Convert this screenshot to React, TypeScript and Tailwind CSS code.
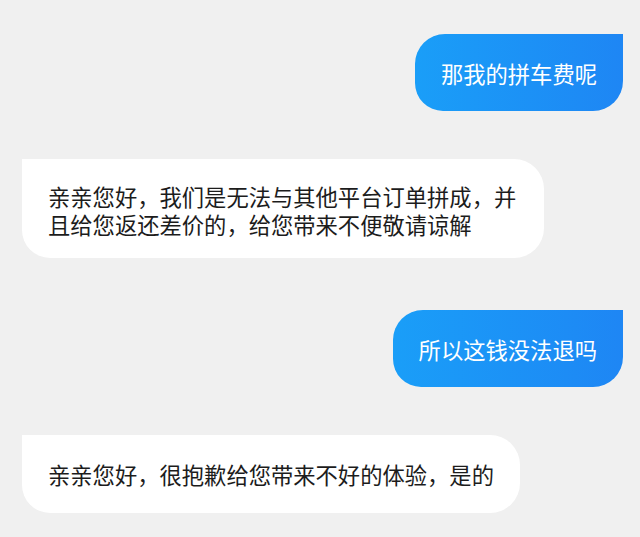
import React from "react";

const font = { fontFamily: '"Noto Sans CJK SC", "Noto Sans", sans-serif' };

function Right({ text, className = "" }: { text: string; className?: string }) {
  return (
    <div className={`flex justify-end pr-[17px] ${className}`}>
      <div className="bg-gradient-to-r from-[#1a9ef8] to-[#1e86f4] text-white text-[22.3px] leading-[28px] px-[26px] py-[24.5px] rounded-tl-[30px] rounded-bl-[28px] rounded-br-[30px] rounded-tr-none">
        {text}
      </div>
    </div>
  );
}

export default function App() {
  return (
    <div className="w-[640px] h-[537px] bg-[#f0f0f0] overflow-hidden pt-[34px]" style={font}>
      <Right text="那我的拼车费呢" />
      <div className="mt-[48px] flex justify-start pl-[22px]">
        <div className="bg-white text-[#1c1c1c] text-[22.3px] leading-[28px] pl-[26px] pr-[24px] pt-[23px] pb-[20px] w-[522px] rounded-tr-[30px] rounded-br-[30px] rounded-bl-[28px]">
          亲亲您好，我们是无法与其他平台订单拼成，并且给您返还差价的，给您带来不便敬请谅解
        </div>
      </div>
      <Right text="所以这钱没法退吗" className="mt-[52px]" />
      <div className="mt-[48px] flex justify-start pl-[22px]">
        <div className="bg-white text-[#1c1c1c] text-[22.3px] leading-[28px] px-[26px] py-[25px] rounded-tr-[30px] rounded-br-[30px] rounded-bl-[28px]">
          亲亲您好，很抱歉给您带来不好的体验，是的
        </div>
      </div>
    </div>
  );
}
